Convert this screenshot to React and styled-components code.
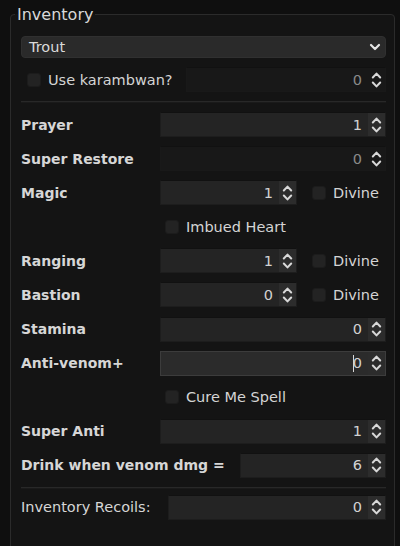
import React from "react";
import styled, { createGlobalStyle } from "styled-components";

const GlobalStyle = createGlobalStyle`
  html, body {
    margin: 0;
    padding: 0;
    background: #0f0f0f;
    font-family: "DejaVu Sans", "Liberation Sans", sans-serif;
    color: #d4d4d4;
  }
`;

const Panel = styled.fieldset`
  box-sizing: border-box;
  width: 385px;
  min-height: 560px;
  margin: 5px 0 0 10px;
  padding: 12px 8px 0 10px;
  border: 1px solid #2b2b2b;
  border-radius: 4px;
  background: #141414;
  display: flex;
  flex-direction: column;
`;

const Legend = styled.legend`
  margin-left: -6px;
  padding: 0 2px;
  font-size: 16px;
  line-height: 19px;
  color: #d8d8d8;
`;

const Section = styled.div`
  display: flex;
  flex-direction: column;
  gap: ${(p) => p.$gap || "9px"};
  margin-top: ${(p) => p.$top || "0"};
`;

const Divider = styled.div`
  height: 1px;
  background: #282828;
  border-bottom: 1px solid #1a1a1a;
  margin: ${(p) => p.$margin};
`;

const Select = styled.div`
  box-sizing: border-box;
  height: 22px;
  display: flex;
  align-items: center;
  justify-content: space-between;
  padding: 0 4px 0 7px;
  background: #2a2a2a;
  border: 1px solid #303030;
  border-radius: 4px;
  font-size: 14.5px;
  color: #dadada;
`;

const Row = styled.div`
  height: 25px;
  display: flex;
  align-items: center;
`;

const Label = styled.div`
  width: ${(p) => p.$width || "139px"};
  flex: none;
  font-size: ${(p) => (p.$bold ? "14px" : "14.5px")};
  font-weight: ${(p) => (p.$bold ? 700 : 400)};
  color: #d6d6d6;
  white-space: nowrap;
`;

const Check = styled.label`
  display: flex;
  align-items: center;
  gap: 7px;
  margin-left: ${(p) => p.$indent || "0"};
  font-size: 14.5px;
  color: #d4d4d4;
  white-space: nowrap;
`;

const Box = styled.span`
  box-sizing: border-box;
  width: 14px;
  height: 14px;
  border-radius: 3px;
  background: #232323;
  border: 1px solid #1c1c1c;
`;

const Spin = styled.div`
  box-sizing: border-box;
  display: flex;
  height: 25px;
  width: ${(p) => p.$width || "auto"};
  flex: ${(p) => (p.$width ? "none" : "1")};
  border: 1px solid ${(p) => (p.$focus ? "#3c3c3c" : p.$disabled ? "#191919" : "#1d1d1d")};
  border-top-color: ${(p) => (p.$focus ? "#3c3c3c" : "#111")};
  background: ${(p) => (p.$disabled ? "#181818" : p.$focus ? "#2b2b2b" : "#242424")};
`;

const Value = styled.div`
  flex: 1;
  display: flex;
  align-items: center;
  justify-content: flex-end;
  padding-right: 6px;
  font-size: 14.5px;
  color: ${(p) => (p.$disabled ? "#8a8a8a" : "#d2d2d2")};
`;

const Caret = styled.span`
  width: 1px;
  height: 17px;
  background: #d8d8d8;
  margin-right: -1px;
`;

const Arrows = styled.div`
  width: 17px;
  flex: none;
  display: flex;
  align-items: center;
  justify-content: center;
  background: ${(p) => (p.$disabled ? "transparent" : "#2c2c2c")};
`;

const Chevron = () => (
  <svg width="12" height="8" viewBox="0 0 12 8">
    <path d="M2 2l4 4 4-4" fill="none" stroke="#e6e6e6" strokeWidth="2.2" strokeLinecap="round" strokeLinejoin="round" />
  </svg>
);

const UpDown = () => (
  <svg width="11" height="18" viewBox="0 0 11 18">
    <g fill="none" stroke="#d8d8d8" strokeWidth="2" strokeLinecap="round" strokeLinejoin="round">
      <path d="M1.8 6.5L5.5 2.6l3.7 3.9" />
      <path d="M1.8 11.5l3.7 3.9 3.7-3.9" />
    </g>
  </svg>
);

const NumberBox = ({ value, width, disabled, focus }) => (
  <Spin $width={width} $disabled={disabled} $focus={focus}>
    <Value $disabled={disabled}>
      {focus && <Caret />}
      {value}
    </Value>
    <Arrows $disabled={disabled}>
      <UpDown />
    </Arrows>
  </Spin>
);

const Checkbox = ({ children, indent }) => (
  <Check $indent={indent}>
    <Box />
    {children}
  </Check>
);

const potions = [
  { label: "Prayer", value: 1 },
  { label: "Super Restore", value: 0, disabled: true },
  { label: "Magic", value: 1, divine: true },
  { check: "Imbued Heart" },
  { label: "Ranging", value: 1, divine: true },
  { label: "Bastion", value: 0, divine: true },
  { label: "Stamina", value: 0 },
  { label: "Anti-venom+", value: 0, focus: true },
  { check: "Cure Me Spell" },
  { label: "Super Anti", value: 1 },
  { label: "Drink when venom dmg =", value: 6, labelWidth: "219px" },
];

export default function App() {
  return (
    <>
      <GlobalStyle />
      <Panel>
        <Legend>Inventory</Legend>
        <Section>
          <Select>
            Trout
            <Chevron />
          </Select>
          <Row>
            <Label $width="165px">
              <Checkbox indent="6px">Use karambwan?</Checkbox>
            </Label>
            <NumberBox value={0} disabled />
          </Row>
        </Section>
        <Divider $margin="9px 0 9px" />
        <Section $gap="9.1px">
          {potions.map((p, i) =>
            p.check ? (
              <Row key={i}>
                <Label />
                <Checkbox indent="5px">{p.check}</Checkbox>
              </Row>
            ) : (
              <Row key={i}>
                <Label $bold $width={p.labelWidth}>{p.label}</Label>
                {p.divine ? (
                  <>
                    <NumberBox value={p.value} width="137px" />
                    <Checkbox indent="15px">Divine</Checkbox>
                  </>
                ) : (
                  <NumberBox value={p.value} disabled={p.disabled} focus={p.focus} />
                )}
              </Row>
            )
          )}
        </Section>
        <Divider $margin="9px 0 6px" />
        <Row>
          <Label $width="147px">Inventory Recoils:</Label>
          <NumberBox value={0} />
        </Row>
      </Panel>
    </>
  );
}
